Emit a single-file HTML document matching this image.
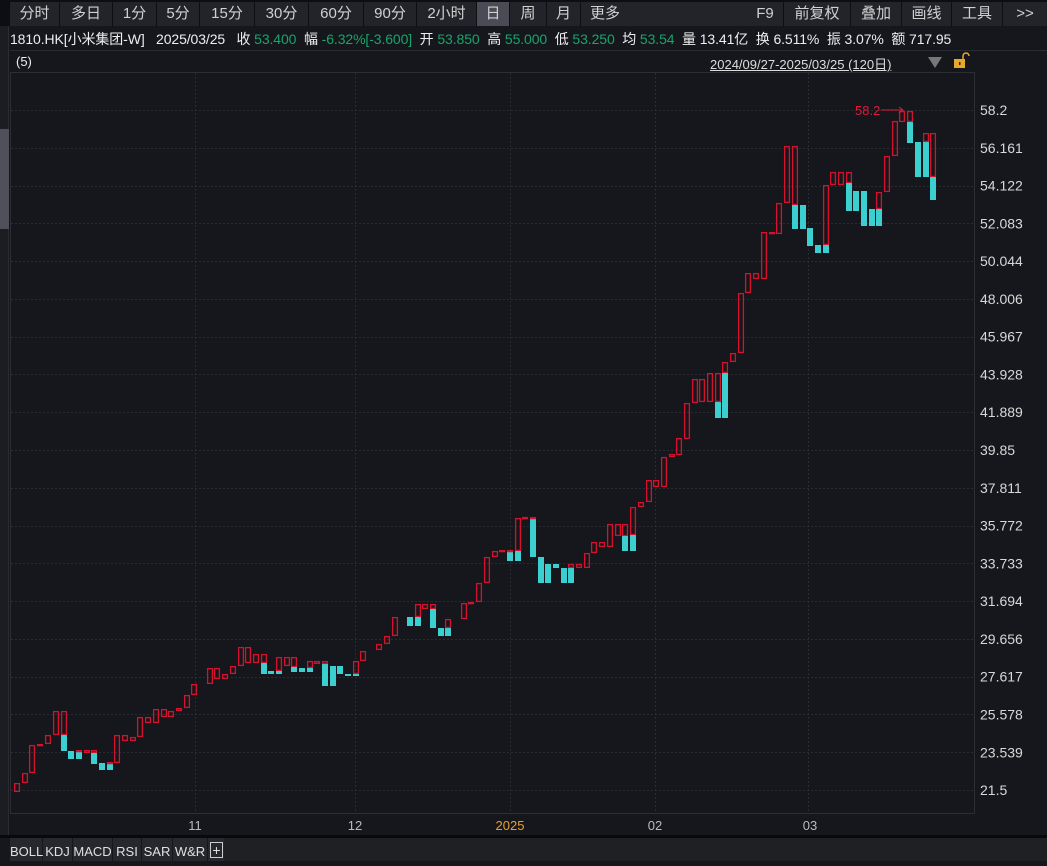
<!DOCTYPE html>
<html><head><meta charset="utf-8"><style>
*{margin:0;padding:0;box-sizing:border-box}
body{width:1047px;height:861px;background:#15171c;font-family:"Liberation Sans","Noto Sans CJK SC",sans-serif;color:#d8d8d8;overflow:hidden;position:relative}
.tb{position:absolute;left:0;top:0;width:1047px;height:26px;background:#0d0e11}
.tb div{position:absolute;top:2px;height:24px;background:#222429;font-size:15px;line-height:24px;text-align:center;color:#d0d0d0}
.tb div.sel{background:#4a4b54}
.info{position:absolute;left:10px;top:27px;width:1037px;height:24px;background:#15171c;border-bottom:1px solid #2a2c31;font-size:14px;line-height:24px;white-space:nowrap;overflow:hidden;color:#eee;letter-spacing:-0.1px}
.g{color:#1aa36a}
.side{position:absolute;left:0;top:26px;width:9px;height:810px;background:#1b1d22;border-right:1px solid #2a2c31}
.bt{position:absolute;top:838px;height:23px;background:#26282d;font-size:13px;line-height:28px;color:#e0e0e0;text-align:center;white-space:nowrap}
</style></head><body>
<div class="tb">
<div style="left:10px;width:49px">分时</div>
<div style="left:60px;width:52px">多日</div>
<div style="left:113px;width:43px">1分</div>
<div style="left:157px;width:42px">5分</div>
<div style="left:200px;width:54px">15分</div>
<div style="left:255px;width:53px">30分</div>
<div style="left:309px;width:54px">60分</div>
<div style="left:364px;width:52px">90分</div>
<div style="left:417px;width:59px">2小时</div>
<div class="sel" style="left:477px;width:32px">日</div>
<div style="left:510px;width:36px">周</div>
<div style="left:547px;width:33px">月</div>
<div style="left:581px;width:166px;text-align:left;padding-left:9px">更多</div>
<div style="left:747px;width:36px">F9</div>
<div style="left:784px;width:66px">前复权</div>
<div style="left:851px;width:50px">叠加</div>
<div style="left:902px;width:49px">画线</div>
<div style="left:952px;width:50px">工具</div>
<div style="left:1003px;width:44px">&gt;&gt;</div>
</div>
<div class="side"><div style="position:absolute;top:103px;left:0;width:9px;height:100px;background:#50505a"></div></div>
<div class="info">1810.HK[小米集团-W]&nbsp;&nbsp; 2025/03/25&nbsp;&nbsp; 收 <span class="g">53.400</span>&nbsp;&nbsp;幅 <span class="g">-6.32%[-3.600]</span>&nbsp;&nbsp;开 <span class="g">53.850</span>&nbsp;&nbsp;高 <span class="g">55.000</span>&nbsp;&nbsp;低 <span class="g">53.250</span>&nbsp;&nbsp;均 <span class="g">53.54</span>&nbsp;&nbsp;量 13.41亿&nbsp;&nbsp;换 6.511%&nbsp;&nbsp;振 3.07%&nbsp;&nbsp;额 717.95</div>
<div style="position:absolute;left:16px;top:54px;font-size:13px;color:#eee">(5)</div>
<div style="position:absolute;left:710px;top:54px;font-size:13px;color:#ddd;text-decoration:underline">2024/09/27-2025/03/25 (120日)</div>
<svg style="position:absolute;left:0;top:0" width="1047" height="861" id="s">
<polygon points="928,57 942,57 935,68" fill="#777"/>
<rect x="954" y="59" width="11" height="9" fill="#e8a92b"/><path d="M963 59 v-3 a3 3 0 0 1 6 0" stroke="#e8a92b" stroke-width="1.5" fill="none"/><rect x="959" y="62" width="1.5" height="3" fill="#222"/>
<rect x="10.5" y="72.5" width="964" height="741" fill="none" stroke="#2c2e33"/>
<g id="grid" stroke="#2a2c31" stroke-dasharray="2,2"></g>
<g id="bars"></g>
<text x="855" y="115" fill="#e0193a" font-size="13" font-family="Liberation Sans">58.2</text>
<path d="M881 110 H903 M899 107 L903 110 L899 113" stroke="#e0193a" fill="none" stroke-width="1"/>
<g id="lab" font-size="14" fill="#d8d8d8" font-family="Liberation Sans"></g>
<g font-size="13" fill="#bbb" font-family="Liberation Sans" text-anchor="middle">
<text x="195" y="830">11</text><text x="355" y="830">12</text><text x="510" y="830" fill="#e8a030">2025</text><text x="655" y="830">02</text><text x="810" y="830">03</text></g>
<rect x="0" y="835" width="1047" height="3" fill="#08090b"/>
<rect x="224" y="838" width="823" height="23" fill="#1e2024"/>
</svg>
<div class="bt" style="left:10px;width:32px">BOLL</div>
<div class="bt" style="left:43px;width:29px">KDJ</div>
<div class="bt" style="left:73px;width:39px">MACD</div>
<div class="bt" style="left:113px;width:28px">RSI</div>
<div class="bt" style="left:142px;width:30px">SAR</div>
<div class="bt" style="left:173px;width:34px">W&amp;R</div>
<div class="bt" style="left:208px;width:16px"><div style="margin:4px 2px;width:13px;height:16px;border:1px solid #ccc;text-align:center;line-height:14px;font-size:14px">+</div></div>
<script>
var N="http://www.w3.org/2000/svg";
function el(t,a,p){var e=document.createElementNS(N,t);for(var k in a)e.setAttribute(k,a[k]);document.getElementById(p).appendChild(e);return e;}
var labs=["58.2","56.161","54.122","52.083","50.044","48.006","45.967","43.928","41.889","39.85","37.811","35.772","33.733","31.694","29.656","27.617","25.578","23.539","21.5"];
labs.forEach(function(l,i){var y=110+i*37.78;el("line",{x1:11,x2:974,y1:Math.round(y)+.5,y2:Math.round(y)+.5},"grid");var t=el("text",{x:980,y:y+5},"lab");t.textContent=l;});
[195,355,510,655,808].forEach(function(x){el("line",{x1:x+.5,x2:x+.5,y1:73,y2:813},"grid");});
var B=[[14,783,792,792],[22,773,783,783],[29,745,773,773],[37,744,746,746],[45,735,744,744],[53,711,735,735],[61,711,735,751],[68,751,751,759],[76,750,751,759],[84,750,753,753],[91,750,753,764],[99,763,763,770],[107,762,763,770],[114,735,763,763],[122,735,741,741],[130,737,741,741],[137,717,737,737],[145,717,723,723],[153,709,723,723],[161,709,717,717],[168,711,717,717],[176,708,711,711],[184,695,708,708],[191,684,695,695],[207,668,684,684],[214,668,679,679],[222,674,679,679],[230,666,674,674],[238,647,666,666],[245,647,663,663],[253,654,663,663],[261,654,663,674],[268,671,671,674],[276,657,671,674],[284,657,666,666],[291,657,667,672],[299,668,668,672],[307,661,668,672],[314,661,664,664],[322,661,664,686],[330,666,666,686],[337,666,666,674],[345,674,674,676],[353,661,674,676],[360,651,661,661],[376,644,650,650],[384,636,644,644],[392,617,636,636],[407,617,617,626],[415,604,617,626],[422,604,609,609],[430,604,609,628],[438,628,628,636],[445,619,628,636],[461,603,619,619],[468,602,603,603],[476,583,602,602],[484,557,583,583],[492,551,557,557],[499,550,552,552],[507,550,552,561],[515,518,551,561],[522,517,518,518],[530,517,518,557],[538,557,557,583],[545,564,564,583],[553,564,564,568],[561,568,568,583],[568,564,568,583],[576,564,568,568],[584,553,568,568],[591,542,553,553],[599,542,547,547],[607,524,547,547],[615,524,536,536],[622,524,536,551],[630,507,535,551],[638,502,507,507],[646,480,502,502],[653,480,487,487],[661,457,487,487],[669,454,457,457],[676,438,455,455],[684,403,439,439],[692,379,403,403],[699,379,402,402],[707,373,402,402],[715,373,402,418],[722,362,373,418],[730,353,362,362],[738,293,353,353],[745,273,293,293],[753,273,279,279],[761,232,279,279],[769,232,234,234],[776,203,234,234],[784,146,203,203],[792,146,205,229],[800,205,205,229],[807,228,228,246],[815,245,245,253],[823,185,245,253],[830,172,185,185],[838,172,185,185],[846,172,183,211],[853,191,191,211],[861,191,191,226],[869,209,209,226],[876,192,209,226],[884,156,192,192],[892,121,156,156],[899,111,122,122],[907,111,122,143],[915,142,142,177],[923,133,142,177],[930,133,177,200]];
B.forEach(function(b){var x=b[0],t=b[1],s=b[2],bt=b[3];
if(bt>s)el("rect",{x:x,y:s,width:6,height:bt-s,fill:"#3ccfcf"},"bars");
if(s>t)el("rect",{x:x+.6,y:t+.6,width:4.8,height:Math.max(s-t-1.2,1),fill:"none",stroke:"#d6112e","stroke-width":1.3},"bars");
else if(bt==s)el("rect",{x:x,y:t,width:6,height:2,fill:"#d6112e"},"bars");});
</script>
</body></html>
